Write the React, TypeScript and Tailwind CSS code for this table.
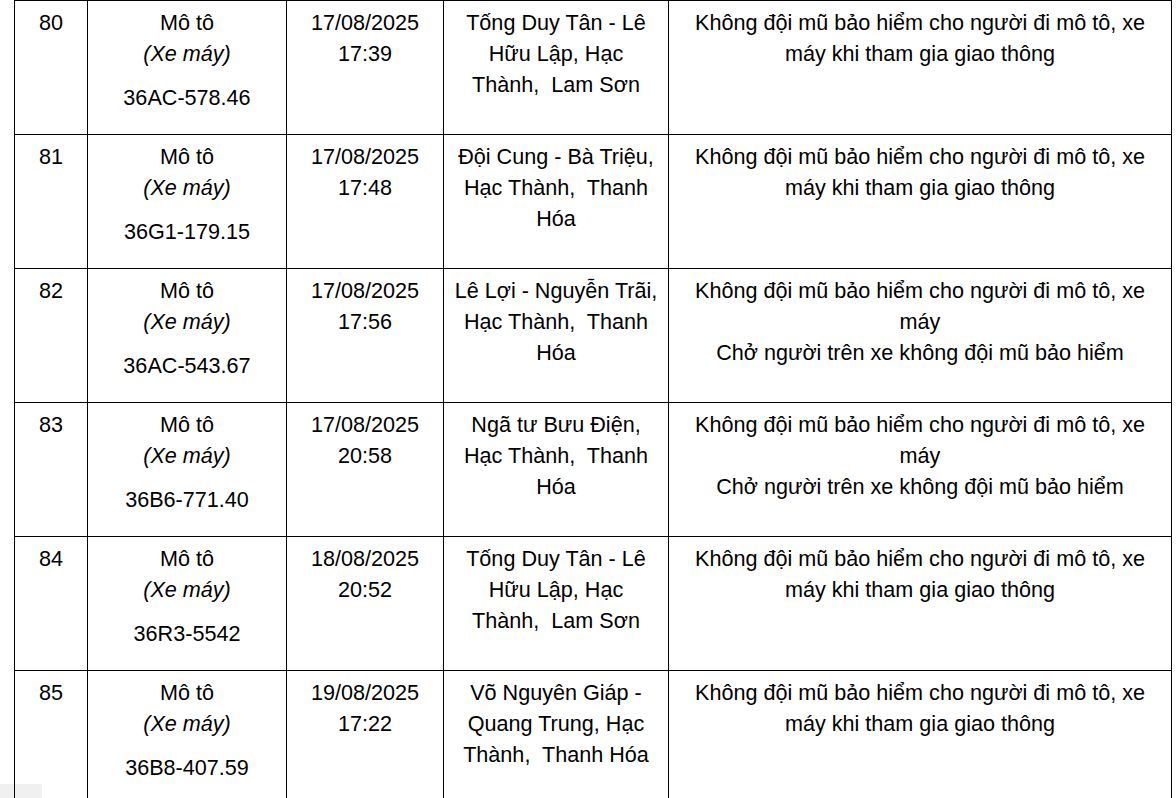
const rows = [
  {
    n: '80',
    plate: '36AC-578.46',
    date: '17/08/2025',
    time: '17:39',
    place: 'Tống Duy Tân - Lê Hữu Lập, Hạc Thành,\u00a0 Lam Sơn',
    acts: ['Không đội mũ bảo hiểm cho người đi mô tô, xe máy khi tham gia giao thông'],
  },
  {
    n: '81',
    plate: '36G1-179.15',
    date: '17/08/2025',
    time: '17:48',
    place: 'Đội Cung - Bà Triệu, Hạc Thành,\u00a0 Thanh Hóa',
    acts: ['Không đội mũ bảo hiểm cho người đi mô tô, xe máy khi tham gia giao thông'],
  },
  {
    n: '82',
    plate: '36AC-543.67',
    date: '17/08/2025',
    time: '17:56',
    place: 'Lê Lợi - Nguyễn Trãi, Hạc Thành,\u00a0 Thanh Hóa',
    acts: ['Không đội mũ bảo hiểm cho người đi mô tô, xe máy', 'Chở người trên xe không đội mũ bảo hiểm'],
  },
  {
    n: '83',
    plate: '36B6-771.40',
    date: '17/08/2025',
    time: '20:58',
    place: 'Ngã tư Bưu Điện, Hạc Thành,\u00a0 Thanh Hóa',
    acts: ['Không đội mũ bảo hiểm cho người đi mô tô, xe máy', 'Chở người trên xe không đội mũ bảo hiểm'],
  },
  {
    n: '84',
    plate: '36R3-5542',
    date: '18/08/2025',
    time: '20:52',
    place: 'Tống Duy Tân - Lê Hữu Lập, Hạc Thành,\u00a0 Lam Sơn',
    acts: ['Không đội mũ bảo hiểm cho người đi mô tô, xe máy khi tham gia giao thông'],
  },
  {
    n: '85',
    plate: '36B8-407.59',
    date: '19/08/2025',
    time: '17:22',
    place: 'Võ Nguyên Giáp - Quang Trung, Hạc Thành,\u00a0 Thanh Hóa',
    acts: ['Không đội mũ bảo hiểm cho người đi mô tô, xe máy khi tham gia giao thông'],
  },
]

export default function App() {
  return (
    <div
      className="relative w-[1176px] h-[798px] overflow-hidden bg-white text-black text-[21.6px] leading-[31px]"
      style={{ fontFamily: '"Liberation Sans", Arial, sans-serif' }}
    >
      {/* ── TABLE ── */}
      <div className="ml-[14px] w-[1158px] border-l border-t border-black">
        {rows.map((r) => (
          <div
            key={r.n}
            className="grid grid-cols-[73px_199px_157px_225px_503px] h-[134px] border-b border-black text-center"
          >
            <div className="border-r border-black pt-[6px]">{r.n}</div>
            <div className="border-r border-black pt-[6px]">
              <p>Mô tô</p>
              <p className="italic">(Xe máy)</p>
              <p className="mt-[13px]">{r.plate}</p>
            </div>
            <div className="border-r border-black pt-[6px]">
              <p>{r.date}</p>
              <p>{r.time}</p>
            </div>
            <div className="border-r border-black pt-[6px] px-2">{r.place}</div>
            <div className="border-r border-black pt-[6px] px-2">
              {r.acts.map((a) => (
                <p key={a}>{a}</p>
              ))}
            </div>
          </div>
        ))}
      </div>

      {/* bottom-left scroll shade */}
      <div className="absolute left-0 bottom-0 w-[42px] h-[14px] bg-black/[0.06]" />
    </div>
  )
}
